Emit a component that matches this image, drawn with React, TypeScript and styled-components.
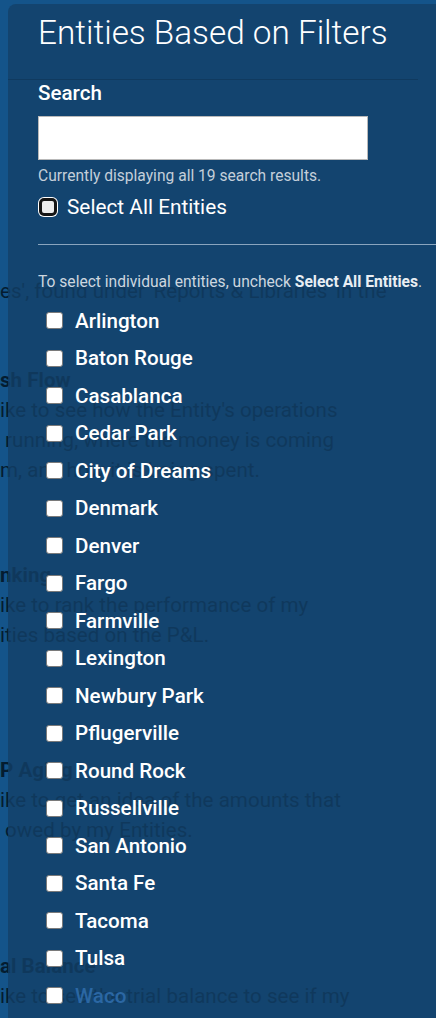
import React from "react";
import styled, { createGlobalStyle } from "styled-components";

const GlobalStyle = createGlobalStyle`
  html, body {
    margin: 0;
    padding: 0;
    background: #14548a;
    font-family: Roboto, "Liberation Sans", sans-serif;
  }
  * { box-sizing: border-box; }
`;

const entities = [
  "Arlington",
  "Baton Rouge",
  "Casablanca",
  "Cedar Park",
  "City of Dreams",
  "Denmark",
  "Denver",
  "Fargo",
  "Farmville",
  "Lexington",
  "Newbury Park",
  "Pflugerville",
  "Round Rock",
  "Russellville",
  "San Antonio",
  "Santa Fe",
  "Tacoma",
  "Tulsa",
  "Waco",
];

// the page behind the drawer, only partly visible
const sections = [
  { gap: 59, title: "sh Flow", lines: ["ike to see how the Entity's operations", " running, where the money is coming", "m, and how it is being spent."] },
  { gap: 75, title: "nking", lines: ["ike to rank the performance of my", "ities based on the P&L."] },
  { gap: 105, title: "P Aging", lines: ["ike to get an idea of the amounts that", " owed by my Entities."] },
  { gap: 106, title: "al Balance", lines: ["ike to see the trial balance to see if my"] },
];

const Screen = styled.div`
  position: relative;
  min-height: 1018px;
  overflow: hidden;
`;

const Behind = styled.div`
  padding-top: 276px;
  color: #041c30;
  font-size: 20.6px;
  line-height: 30px;
  white-space: pre;
`;

const BehindSection = styled.section<{ $gap: number }>`
  margin-top: ${(p) => p.$gap}px;
`;

const BehindTitle = styled.div`
  font-weight: 700;
`;

const BehindLine = styled.div``;

const Drawer = styled.aside`
  position: absolute;
  top: 4px;
  left: 8px;
  right: 0;
  bottom: 0;
  background: rgba(19, 64, 104, 0.8);
  border-top-left-radius: 8px;
  color: #fff;
`;

const Header = styled.header`
  margin-right: 18px;
  padding: 10px 0 27px 30px;
  border-bottom: 1px solid rgba(0, 0, 0, 0.14);
`;

const Title = styled.h1`
  margin: 0;
  font-size: 33.3px;
  font-weight: 300;
  line-height: 38px;
`;

const Body = styled.div`
  padding-left: 30px;
`;

const Label = styled.label`
  display: block;
  margin-top: 1px;
  font-size: 20.6px;
  font-weight: 500;
  line-height: 24px;
`;

const SearchInput = styled.input`
  display: block;
  margin-top: 11px;
  width: 330px;
  height: 44px;
  border: 1px solid #b9b9b9;
  background: #fff;
  outline: none;
`;

const Helper = styled.p`
  margin: 6px 0 0;
  font-size: 15.6px;
  line-height: 20px;
  color: #c4cfda;
`;

const CheckRow = styled.label`
  display: flex;
  align-items: center;
  height: 24px;
  margin-top: 9px;
  gap: 10px;
  font-size: 20.8px;
  line-height: 24px;
`;

const FocusBox = styled.input`
  appearance: none;
  margin: 0 0 0 1px;
  width: 18px;
  height: 18px;
  border: 3px solid #151515;
  border-radius: 5px;
  background: #ececec;
  box-shadow: 0 0 0 1px #fff;
`;

const Rule = styled.hr`
  margin: 25px 0 0;
  border: 0;
  border-top: 1px solid rgba(190, 207, 224, 0.7);
`;

const Hint = styled.p`
  margin: 27px 0 0;
  font-size: 15.6px;
  line-height: 21px;
  color: #cdd6df;

  strong {
    font-weight: 700;
    color: #e9eef3;
  }
`;

const List = styled.ul`
  list-style: none;
  margin: 9px 0 0;
  padding: 0 0 0 8px;
`;

const Item = styled.li`
  display: flex;
  align-items: center;
  height: 37.5px;
`;

const Box = styled.input`
  appearance: none;
  margin: 0;
  width: 17px;
  height: 17px;
  border: 1.5px solid #7a7a7a;
  border-radius: 3px;
  background: #fff;
`;

const ItemLabel = styled.span<{ $dim?: boolean }>`
  margin-left: 12px;
  font-size: 20.6px;
  font-weight: 500;
  color: ${(p) => (p.$dim ? "#2b67a3" : "#fff")};
`;

export default function App() {
  return (
    <Screen>
      <GlobalStyle />
      <Behind>
        <BehindLine>es', found under 'Reports &amp; Libraries' in the</BehindLine>
        {sections.map((s) => (
          <BehindSection key={s.title} $gap={s.gap}>
            <BehindTitle>{s.title}</BehindTitle>
            {s.lines.map((l) => (
              <BehindLine key={l}>{l}</BehindLine>
            ))}
          </BehindSection>
        ))}
      </Behind>

      <Drawer>
        <Header>
          <Title>Entities Based on Filters</Title>
        </Header>
        <Body>
          <Label>Search</Label>
          <SearchInput type="text" />
          <Helper>Currently displaying all 19 search results.</Helper>
          <CheckRow>
            <FocusBox type="checkbox" />
            Select All Entities
          </CheckRow>
          <Rule />
          <Hint>
            To select individual entities, uncheck <strong>Select All Entities</strong>.
          </Hint>
          <List>
            {entities.map((name) => (
              <Item key={name}>
                <Box type="checkbox" />
                <ItemLabel $dim={name === "Waco"}>{name}</ItemLabel>
              </Item>
            ))}
          </List>
        </Body>
      </Drawer>
    </Screen>
  );
}
